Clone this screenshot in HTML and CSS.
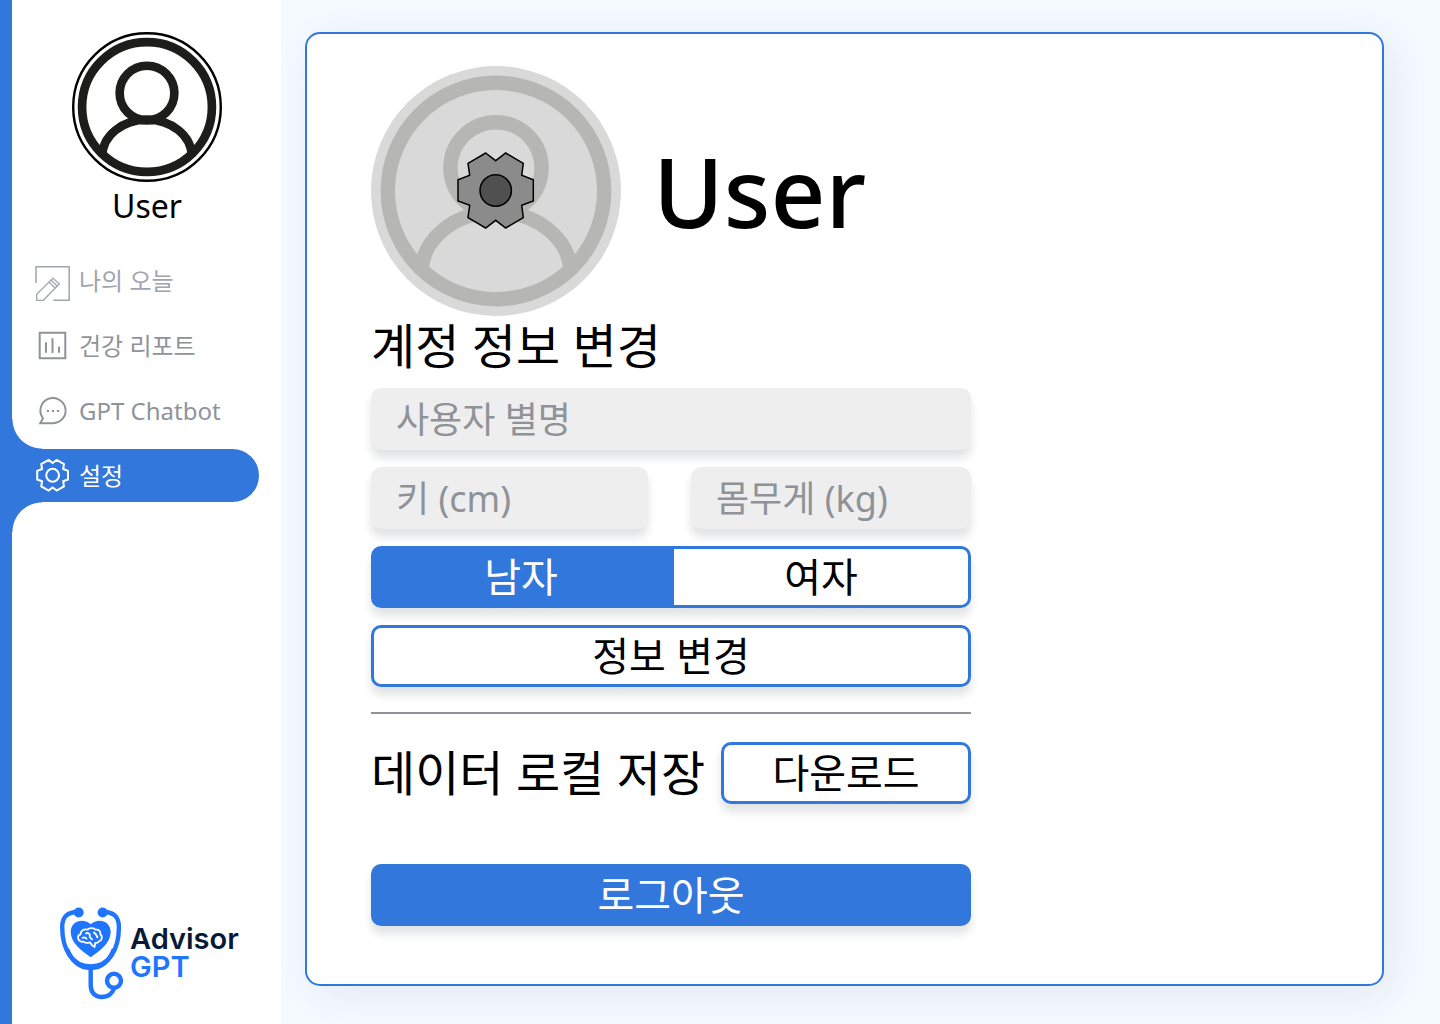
FILE: index.html
```html
<!DOCTYPE html>
<html lang="ko">
<head>
<meta charset="utf-8">
<meta name="viewport" content="width=device-width, initial-scale=1">
<title>설정 - Advisor GPT</title>
<link rel="stylesheet" href="styles.css">
</head>
<body>
<svg class="sprite" aria-hidden="true">
  <symbol id="person" viewBox="0 0 250 250">
    <g fill="none" stroke="currentColor" stroke-width="14.4">
      <circle cx="125" cy="125" r="108.2"/>
      <circle cx="125" cy="101.8" r="45.6"/>
      <path d="M50.5 207C50.5 173 84 146 125 146S199.500 173 199.500 207"/>
    </g>
  </symbol>
  <symbol id="gear" viewBox="84 84 82 81">
    <path d="M114.700 87L124.700 94.700L134.700 87L152.300 97.300L150.700 109.300L162.300 113.700V135L150.700 139.300L152.300 151.700L134.700 162L124.700 154.300L114.700 162L97 151.700L98.700 139.300L87 135V113.700L98.700 109.300L97 97.300Z"/>
    <circle class="gear-hub" cx="124.700" cy="124.500" r="15.700"/>
  </symbol>
</svg>

<aside class="sidebar">
  <div class="profile">
    <svg class="profile-photo" viewBox="0 0 250 250" aria-hidden="true">
      <circle cx="125" cy="125" r="123" fill="#fff" stroke="#000" stroke-width="4"/>
      <use href="#person"/>
    </svg>
    <span class="profile-name">User</span>
  </div>
  <nav>
    <ul class="menu">
      <li><a class="menu-link light" href="#today">
        <svg viewBox="0 0 36 41" aria-hidden="true">
          <path stroke-width="1.500" d="M2 23V6.700H35.200V40.300H19.300"/>
          <path stroke-width="1.300" d="M2.700 40.300V34.300L18.900 18.100L25.300 24L9.300 40.300ZM14.800 22L21.200 28.200M17 20L23.400 26.200"/>
        </svg>나의 오늘</a></li>
      <li><a class="menu-link" href="#report">
        <svg viewBox="0 0 36 41" aria-hidden="true">
          <path stroke-width="2" d="M5.700 7.700H31.300V33.300H5.700ZM12 17.300V27.700M18.500 13.300V28M25 21.700V27.700"/>
        </svg>건강 리포트</a></li>
      <li><a class="menu-link" href="#chatbot">
        <svg viewBox="0 0 36 41" aria-hidden="true">
          <path stroke-width="1.900" d="M19 33.200A12.600 12.600 0 1 0 9 28.300L6.200 33.200Z"/>
          <path stroke-width="2.200" d="M12.900 21H15.100M17.900 21H20.100M22.900 21H25.100"/>
        </svg>GPT Chatbot</a></li>
      <li><a class="menu-link active" href="#settings" aria-current="page">
        <svg viewBox="0 0 36 41" aria-hidden="true"><use href="#gear" x="2" y="3.500" width="33.500" height="33.500"/></svg>설정</a></li>
    </ul>
  </nav>
  <a class="logo" href="#home">
    <svg viewBox="0 0 64 94" aria-hidden="true">
      <g fill="none" stroke="#1f75fe" stroke-width="4.400">
        <path d="M18.700 5.800C7 6 2.200 11 2.200 21C2.200 43 12 60.500 30.700 60.500S58.900 43 58.900 21C58.900 11 54 6 42.700 5.800"/>
        <path d="M7 43C12 56 20 62 30.700 62S49 56 54 43"/>
        <path d="M30.700 62V79C30.700 87 35 91 42 91C48 91 52 88 54.300 82"/>
        <circle cx="54" cy="74.800" r="7"/>
      </g>
      <g fill="#1f75fe">
        <circle cx="18.700" cy="6.500" r="5"/>
        <circle cx="42.600" cy="6.500" r="5"/>
        <path d="M30.700 51.200C22 45 10.700 37 10.700 26C10.700 14.500 24 11.500 30.700 18.300C37.400 11.500 50.700 14.500 50.700 26C50.700 37 39.500 45 30.700 51.200Z"/>
      </g>
      <g fill="none" stroke="#fff" stroke-width="1.800" stroke-linecap="round" stroke-linejoin="round">
        <path d="M20 35C17 33 17.500 29 20.500 28.500C20.500 25 24 22.500 27 23.700C29.500 21.500 34 21.500 35.500 23.700C38.500 23 41 25.500 40.300 28.300C43 30.500 42 35 38.500 35.700C37.500 37 36 37 35.300 36.800L34.500 41C32 40 31 38 30 36.300C27 37.300 24.500 37 23.500 35.600C22 36 20.800 35.600 20 35Z"/>
        <path d="M22.500 31.800C24 31 25.500 31.300 26.500 32.800M26 27.500C27.500 26.500 29 27 29.700 28.500L29.800 31L32 33.300M34 26.500L36 28.500L37.500 31.500"/>
      </g>
    </svg>
    <span class="logo-text"><span>Advisor</span><span class="logo-accent">GPT</span></span>
  </a>
</aside>

<main class="main">
  <section class="card">
    <header class="hero">
      <button class="photo-button" type="button" aria-label="프로필 사진 변경">
        <svg viewBox="0 0 250 250" aria-hidden="true">
          <circle cx="125" cy="125" r="125" fill="#d9d9d9"/>
          <use href="#person"/>
          <use class="photo-gear" href="#gear" x="84" y="84" width="82" height="81"/>
        </svg>
      </button>
      <h1>User</h1>
    </header>

    <div class="content">
      <form class="account">
        <h2>계정 정보 변경</h2>
        <div class="fields">
          <input class="field" type="text" name="nickname" placeholder="사용자 별명" aria-label="사용자 별명">
          <div class="field-pair">
            <input class="field" type="text" name="height" placeholder="키 (cm)" aria-label="키 (cm)">
            <input class="field" type="text" name="weight" placeholder="몸무게 (kg)" aria-label="몸무게 (kg)">
          </div>
          <div class="gender" role="radiogroup" aria-label="성별">
            <input type="radio" id="male" name="gender" checked>
            <label for="male">남자</label>
            <input type="radio" id="female" name="gender">
            <label for="female">여자</label>
          </div>
          <button class="button" type="button">정보 변경</button>
        </div>
      </form>
      <hr>
      <div class="data-row">
        <h2>데이터 로컬 저장</h2>
        <button class="button download" type="button">다운로드</button>
      </div>
      <button class="button primary" type="button">로그아웃</button>
    </div>
  </section>
</main>
</body>
</html>
```
FILE: styles.css
```css
:root {
  --blue: #3277dc;
  --grey: #8f9399;
  --shadow: 0 8px 8px rgba(15, 25, 45, 0.12);
  --font: "Noto Sans", "Noto Sans CJK KR", sans-serif;
}

* { box-sizing: border-box; }

body {
  margin: 0;
  min-height: 100vh;
  display: flex;
  background: #f4faff;
  color: #000;
  font-family: var(--font);
}

h1, h2, ul { margin: 0; padding: 0; }
button, input { font-family: inherit; }

.sprite { position: absolute; width: 0; height: 0; }

/* Sidebar */
.sidebar {
  flex: 0 0 281px;
  display: flex;
  flex-direction: column;
  background: #fff;
  border-left: 12px solid var(--blue);
}

.profile {
  display: flex;
  flex-direction: column;
  align-items: center;
  padding: 32px 59px 0 60px;
}

.profile-photo { width: 150px; height: 150px; color: #1d1d1b; }

.profile-name { font-size: 32px; line-height: 48px; }

.menu {
  display: grid;
  gap: 12px;
  padding: 24px 22px 0 0;
  list-style: none;
}

.menu-link {
  position: relative;
  display: flex;
  align-items: center;
  gap: 9px;
  height: 53px;
  padding-left: 22px;
  color: var(--grey);
  font-size: 24px;
  line-height: 36px;
  text-decoration: none;
}

.menu-link svg {
  width: 36px;
  height: 41px;
  overflow: visible;
  fill: none;
  stroke: currentColor;
}

.menu-link.light { color: #a0a4b0; }

.menu-link.active {
  border-radius: 0 27px 27px 0;
  background: var(--blue);
  color: #fff;
  stroke-width: 5px;
}

/* Concave corners joining the active item to the blue edge */
.menu-link.active::before,
.menu-link.active::after {
  content: "";
  position: absolute;
  left: 0;
  width: 30px;
  height: 30px;
}

.menu-link.active::before {
  bottom: 100%;
  background: radial-gradient(circle at 100% 0, transparent 29px, var(--blue) 30px);
}

.menu-link.active::after {
  top: 100%;
  background: radial-gradient(circle at 100% 100%, transparent 29px, var(--blue) 30px);
}

.logo {
  display: flex;
  align-items: center;
  gap: 6px;
  margin-top: auto;
  padding: 24px 24px 24px 48px;
  color: #071a38;
  text-decoration: none;
}

.logo svg { flex: none; width: 64px; height: 94px; }

.logo-text {
  display: grid;
  font: 600 29px/28px Inter, sans-serif;
}

.logo-accent { color: #1f75fe; }

/* Settings card */
.main {
  flex: 1;
  display: flex;
  padding: 32px 56px 38px 24px;
}

.card {
  flex: 1;
  padding: 32px 64px 58px;
  border: 2px solid var(--blue);
  border-radius: 15px;
  background: #fff;
  box-shadow: 8px 8px 40px rgba(20, 20, 43, 0.08);
}

.hero { display: flex; align-items: center; gap: 32px; }

.hero h1 { font-size: 96px; font-weight: 500; line-height: 120px; }

.photo-button {
  width: 250px;
  height: 250px;
  padding: 0;
  border: 0;
  border-radius: 50%;
  background: none;
  color: #b6b6b4;
  cursor: pointer;
}

.photo-button svg { display: block; }

.photo-gear {
  --hub: #505050;
  fill: #8b8b8b;
  stroke: #000;
  stroke-width: 1.5px;
}

.gear-hub { fill: var(--hub, none); }

.content { max-width: 600px; }

h2 { font-size: 48px; font-weight: 400; line-height: 60px; }

.account h2 { margin-bottom: 12px; }

.fields { display: grid; gap: 17px; }

.field-pair {
  display: grid;
  grid-template-columns: 277fr 280fr;
  gap: 43px;
}

.field {
  width: 100%;
  height: 62px;
  padding: 0 25px;
  border: 0;
  border-radius: 10px;
  background: #eee;
  box-shadow: var(--shadow);
  font-size: 36px;
}

.field::placeholder { color: var(--grey); opacity: 1; }

.gender {
  display: grid;
  grid-template-columns: 1fr 1fr;
  border-radius: 10px;
  box-shadow: var(--shadow);
}

.gender input { position: absolute; opacity: 0; pointer-events: none; }

.gender label,
.button {
  height: 62px;
  border: 3px solid var(--blue);
  border-radius: 10px;
  background: #fff;
  color: #000;
  font-size: 40px;
  line-height: 56px;
  text-align: center;
  cursor: pointer;
}

.button { padding: 0; box-shadow: var(--shadow); }

.gender label:first-of-type { border-radius: 10px 0 0 10px; }
.gender label:last-of-type { border-radius: 0 10px 10px 0; }

.gender input:checked + label,
.button.primary {
  background: var(--blue);
  color: #fff;
}

hr {
  height: 2px;
  margin: 25px 0 28px;
  border: 0;
  background: var(--grey);
}

.data-row {
  display: flex;
  align-items: center;
  justify-content: space-between;
  margin-bottom: 60px;
}

.button.download { width: 250px; }
.button.primary { width: 100%; }
```
